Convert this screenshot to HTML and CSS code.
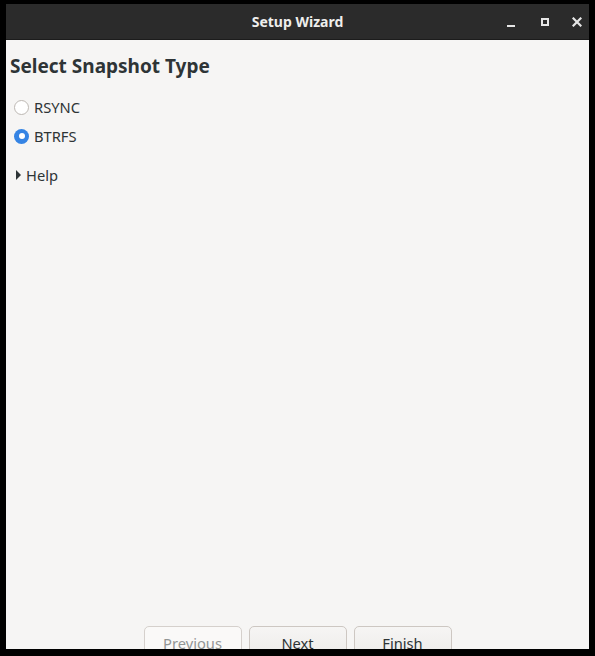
FILE: index.html
```html
<!DOCTYPE html>
<html>
<head>
<meta charset="utf-8">
<title>Setup Wizard</title>
<link rel="stylesheet" href="styles.css">
</head>
<body>
<div class="window">
  <header class="titlebar">
    <span class="title">Setup Wizard</span>
    <div class="controls">
      <span class="ctl ctl-min"></span>
      <span class="ctl ctl-max"></span>
      <svg class="ctl-close" width="10" height="10" viewBox="0 0 10 10"><path d="M1.5 1.5 L8.5 8.5 M8.5 1.5 L1.5 8.5" stroke="#e6e6e6" stroke-width="2.2" stroke-linecap="square"/></svg>
    </div>
  </header>
  <main class="content">
    <h1 class="heading">Select Snapshot Type</h1>
    <div class="options">
      <label class="option"><span class="radio"></span>RSYNC</label>
      <label class="option"><span class="radio checked"></span>BTRFS</label>
    </div>
    <div class="expander"><span class="arrow"></span>Help</div>
    <div class="buttons">
      <button class="btn disabled">Previous</button>
      <button class="btn">Next</button>
      <button class="btn">Finish</button>
    </div>
  </main>
</div>
</body>
</html>
```
FILE: styles.css
```css
html, body {
  margin: 0;
  padding: 0;
  background: #000;
  height: 656px;
  overflow: hidden;
}
body {
  padding: 4px 6px 7px 6px;
  box-sizing: border-box;
  font-family: "Noto Sans", "Open Sans", sans-serif;
}
.window {
  height: 645px;
  display: flex;
  flex-direction: column;
  overflow: hidden;
  background: #f6f5f4;
}
.titlebar {
  height: 35px;
  flex: none;
  background: #2b2b2b;
  border-bottom: 1px solid #1c1c1c;
  position: relative;
  display: flex;
  align-items: center;
  justify-content: center;
}
.title {
  color: #eeeeec;
  font-weight: bold;
  font-size: 14px;
}
.controls {
  position: absolute;
  right: 7px;
  top: 0;
  height: 35px;
  display: flex;
  align-items: center;
  gap: 0;
}
.ctl {
  display: block;
  box-sizing: border-box;
}
.ctl-min {
  width: 8px;
  height: 2px;
  background: #e6e6e6;
  margin-top: 8px;
  margin-right: 26px;
}
.ctl-max {
  width: 8px;
  height: 8px;
  border: 2px solid #e6e6e6;
  margin-right: 23px;
}
.ctl-close { display: block; }
.content {
  flex: 1;
  display: flex;
  flex-direction: column;
  padding: 0 4px;
  color: #2e3436;
}
.heading {
  margin: 13px 0 0 0;
  font-size: 19px;
  font-weight: bold;
  color: #2e3436;
  line-height: 26px;
}
.options {
  margin-top: 18px;
  display: flex;
  flex-direction: column;
  gap: 9px;
}
.option {
  display: flex;
  align-items: center;
  font-size: 14.7px;
  line-height: 20px;
  color: #2e3436;
  padding-left: 4px;
}
.radio {
  width: 15px;
  height: 15px;
  box-sizing: border-box;
  border-radius: 50%;
  border: 1px solid #bdb8b3;
  background: #fff;
  margin-right: 5px;
  position: relative;
}
.radio.checked {
  border: none;
  background: #3584e4;
}
.radio.checked::after {
  content: "";
  position: absolute;
  left: 4.5px;
  top: 4.5px;
  width: 6px;
  height: 6px;
  border-radius: 50%;
  background: #fff;
}
.expander {
  margin-top: 19px;
  display: flex;
  align-items: center;
  font-size: 14.7px;
  line-height: 20px;
  padding-left: 6px;
  color: #2e3436;
}
.arrow {
  width: 0;
  height: 0;
  border-top: 5px solid transparent;
  border-bottom: 5px solid transparent;
  border-left: 5px solid #2e3436;
  margin-right: 5px;
}
.buttons {
  margin-top: auto;
  display: flex;
  justify-content: center;
  gap: 7px;
  margin-bottom: -10px;
}
.btn {
  width: 98px;
  height: 33px;
  font-family: "Noto Sans", "Open Sans", sans-serif;
  font-size: 14.7px;
  color: #2e3436;
  border: 1px solid #cdc7c2;
  border-radius: 5px;
  background: linear-gradient(#f6f5f4, #edebe9);
  padding: 0;
}
.btn.disabled {
  color: #929595;
  background: #faf9f8;
  border-color: #d5d0cc;
}
```
